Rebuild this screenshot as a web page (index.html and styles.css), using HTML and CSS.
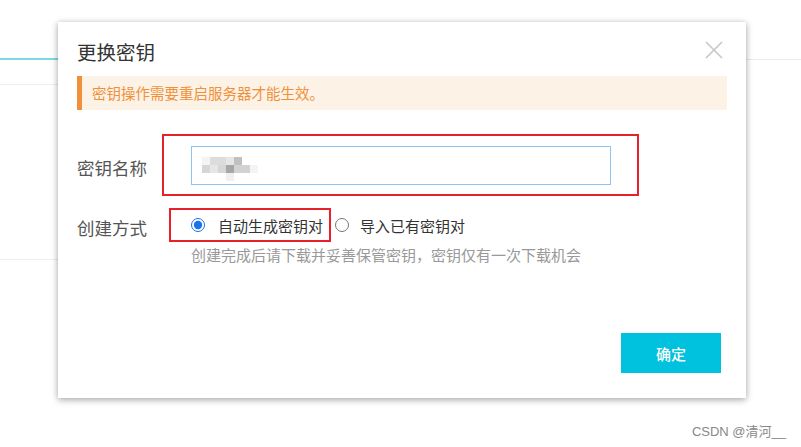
FILE: index.html
```html
<!DOCTYPE html>
<html lang="zh-CN">
<head>
<meta charset="utf-8">
<title>更换密钥</title>
<link rel="stylesheet" href="styles.css">
</head>
<body>
<div class="page">
  <div class="tabs">
    <div class="tab active"></div>
    <div class="tab rest"></div>
  </div>
  <div class="list">
    <div class="list-head"></div>
    <div class="list-row"></div>
  </div>

  <div class="dialog" role="dialog">
    <button class="close" aria-label="关闭">
      <svg width="18" height="18" viewBox="0 0 18 18"><path d="M1 1 L17 17 M17 1 L1 17" stroke="#c6c6c6" stroke-width="1.6" fill="none"/></svg>
    </button>
    <h2 class="title">更换密钥</h2>
    <div class="alert">密钥操作需要重启服务器才能生效。</div>
    <div class="form">
      <div class="label l1">密钥名称</div>
      <div class="field f1">
        <div class="input">
          <div class="mosaic">
            <span class="m a"></span><span class="m b"></span><span class="m b"></span><span class="m c"></span><span class="m d"></span><span class="m w"></span><span class="m w"></span>
            <span class="m b2"></span><span class="m c"></span><span class="m b2"></span><span class="m e"></span><span class="m f"></span><span class="m f"></span><span class="m a"></span>
            <span class="m w"></span><span class="m w"></span><span class="m w"></span><span class="m g"></span><span class="m w"></span><span class="m w"></span><span class="m w"></span>
          </div>
        </div>
        <span class="mark mark1"></span>
      </div>
      <div class="label l2">创建方式</div>
      <div class="field f2">
        <div class="radios">
          <label class="radio"><input type="radio" name="mode" checked><span>自动生成密钥对</span></label>
          <label class="radio"><input type="radio" name="mode"><span>导入已有密钥对</span></label>
        </div>
        <div class="help">创建完成后请下载并妥善保管密钥，密钥仅有一次下载机会</div>
        <span class="mark mark2"></span>
      </div>
    </div>
    <div class="footer">
      <button class="btn-primary">确定</button>
    </div>
  </div>

  <div class="watermark">CSDN @清河__</div>
</div>
</body>
</html>
```

FILE: styles.css
```css
* { box-sizing: border-box; }
html, body { margin: 0; padding: 0; background: #fff; }
body {
  width: 801px;
  height: 447px;
  overflow: hidden;
  font-family: "Noto Sans CJK SC", "Noto Sans", sans-serif;
  color: #333;
}
.page { position: relative; width: 801px; height: 447px; }

.tabs { display: flex; height: 60px; }
.tab.active { width: 200px; border-bottom: 2px solid #7dd8e6; }
.tab.rest { flex: 1; border-bottom: 1px solid #ececec; }

.list { width: 300px; }
.list-head { height: 25px; border-bottom: 1px solid #eeeeee; }
.list-row { height: 175px; border-bottom: 1px solid #eeeeee; }

.dialog {
  position: absolute;
  left: 58px;
  top: 22px;
  width: 688px;
  height: 376px;
  background: #fff;
  box-shadow: 0 1px 6px rgba(0,0,0,0.28), 0 3px 8px rgba(0,0,0,0.12);
  padding: 17px 19px 25px 19px;
  display: flex;
  flex-direction: column;
}
.close {
  position: absolute;
  right: 23px;
  top: 19px;
  width: 18px;
  height: 18px;
  padding: 0;
  border: 0;
  background: none;
  display: flex;
}
.title {
  margin: 0;
  font-size: 19.5px;
  font-weight: 400;
  line-height: 26px;
  color: #333;
}
.alert {
  margin-top: 11px;
  height: 34px;
  line-height: 34px;
  background: #fdf2e6;
  border-left: 5px solid #f0913a;
  padding-left: 10px;
  color: #f0913a;
  font-size: 14.5px;
}
.form {
  margin-top: 36px;
  display: grid;
  grid-template-columns: 114px 420px;
  row-gap: 30px;
}
.label {
  font-size: 17.5px;
  color: #555;
  line-height: 24px;
}
.l1 { padding-top: 10px; }
.l2 { padding-top: 1px; }
.field { position: relative; }
.input {
  width: 420px;
  height: 39px;
  border: 1px solid #8ec4ee;
  background: #fff;
  padding: 10px 0 0 10px;
}
.mosaic {
  display: grid;
  grid-template-columns: repeat(7, 8px);
  grid-auto-rows: 8px;
}
.m { display: block; }
.m.a { background: #f4f4f4; }
.m.b { background: #dcdcdc; }
.m.b2 { background: #d6d6d6; }
.m.c { background: #e6e6e6; }
.m.d { background: #c0c0c0; }
.m.e { background: #a6a6a6; }
.m.f { background: #d2d2d2; }
.m.g { background: #f0f0f0; }
.m.w { background: transparent; }

.radios { display: flex; align-items: center; height: 20px; font-size: 15px; color: #333; }
.radio { display: flex; align-items: center; gap: 13px; margin-right: 12px; }
.radio + .radio { gap: 11px; }
.radio input {
  width: 14px;
  height: 14px;
  margin: 0;
  accent-color: #1a73e8;
}
.help {
  margin-top: 10px;
  font-size: 15px;
  line-height: 20px;
  color: #999;
}
.mark {
  position: absolute;
  border: 2px solid #e8202a;
  pointer-events: none;
}
.mark1 { left: -29px; top: -12px; width: 477px; height: 62px; }
.mark2 { left: -22px; top: -7px; width: 162px; height: 34px; }

.footer { margin-top: auto; display: flex; justify-content: flex-end; padding-right: 6px; }
.btn-primary {
  width: 100px;
  height: 40px;
  border: 0;
  background: #00c1de;
  color: #fff;
  font-family: "Noto Sans CJK SC", sans-serif;
  font-size: 15px;
  font-weight: 500;
}

.watermark {
  position: absolute;
  right: 15px;
  top: 423px;
  font-size: 13px;
  color: #888;
  font-family: "Liberation Sans", "Noto Sans CJK SC", sans-serif;
  line-height: 18px;
}
```
